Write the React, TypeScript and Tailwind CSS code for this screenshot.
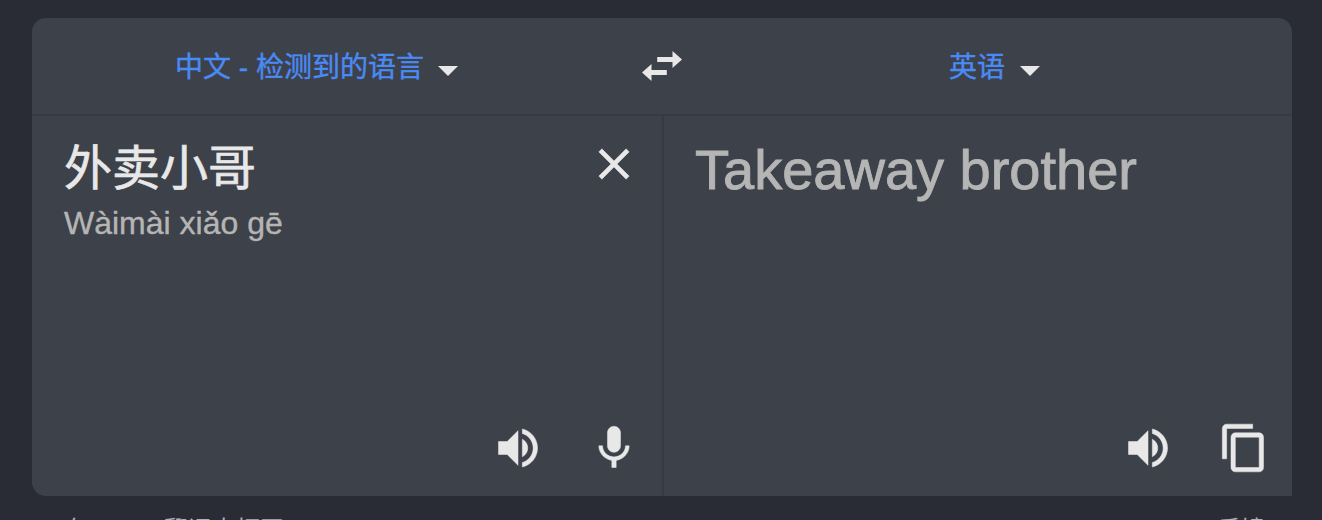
import type { ReactNode } from "react";

const VOLUME =
  "M3 9v6h4l5 5V4L7 9H3zm13.5 3c0-1.77-1.02-3.29-2.5-4.03v8.05c1.48-.73 2.5-2.25 2.5-4.02zM14 3.23v2.06c2.89.86 5 3.54 5 6.71s-2.11 5.85-5 6.71v2.06c4.01-.91 7-4.49 7-8.77s-2.99-7.86-7-8.77z";
const MIC =
  "M12 14c1.66 0 2.99-1.34 2.99-3L15 5c0-1.66-1.34-3-3-3S9 3.34 9 5v6c0 1.66 1.34 3 3 3zm5.3-3c0 3-2.54 5.1-5.3 5.1S6.7 14 6.7 11H5c0 3.41 2.72 6.23 6 6.72V21h2v-3.28c3.28-.48 6-3.3 6-6.72h-1.7z";
const COPY =
  "M16 1H4c-1.1 0-2 .9-2 2v14h2V3h12V1zm3 4H8c-1.1 0-2 .9-2 2v14c0 1.1.9 2 2 2h11c1.1 0 2-.9 2-2V7c0-1.1-.9-2-2-2zm0 16H8V7h11v14z";
const CLOSE =
  "M19 6.41L17.59 5 12 10.59 6.41 5 5 6.41 10.59 12 5 17.59 6.41 19 12 13.41 17.59 19 19 17.59 13.41 12z";

function IconButton({ label, d }: { label: string; d: string }) {
  return (
    <button aria-label={label} className="size-[52px] shrink-0 text-[#e8e8e8]">
      <svg viewBox="0 0 24 24" fill="currentColor" stroke="currentColor" strokeWidth="0.24" className="size-[52px]">
        <path d={d} />
      </svg>
    </button>
  );
}

function LanguageButton({ children }: { children: ReactNode }) {
  return (
    <button className="flex items-center text-[28px] leading-10 whitespace-nowrap text-[#4a8af4]">
      <span className="pt-1 [-webkit-text-stroke:0.4px]">{children}</span>
      <svg viewBox="0 0 20 10" className="mt-[9px] ml-[14.5px] h-[10px] w-5 fill-[#e8e8e8]">
        <path d="M0 0h20L10 10z" />
      </svg>
    </button>
  );
}

export default function App() {
  return (
    <div className="flex h-[520px] w-[1322px] flex-col overflow-hidden bg-[#292c35] pt-[18px] pr-[30px] pl-8 font-['Liberation_Sans','Noto_Sans_CJK_SC',sans-serif]">
      <main className="flex h-[478px] shrink-0 flex-col rounded-[14px] rounded-br-none bg-[#3d4149]">
        <header className="flex h-[98px] shrink-0 border-b-2 border-[#363a42]">
          <div className="flex w-[610px] items-center pl-[143px]">
            <LanguageButton>中文 - 检测到的语言</LanguageButton>
          </div>
          <button aria-label="交换语言" className="flex w-10 items-center justify-center">
            <svg viewBox="0 0 40 30" className="h-[30px] w-10 fill-[#e8e8e8]">
              <path d="M15.2 5.9h15.300V0L40 8.5 30.5 17v-5.900H15.200zM24.800 24.100H9.500V30L0 21.500 9.500 13v5.900h15.300z" />
            </svg>
          </button>
          <div className="flex flex-1 items-center pl-[267px]">
            <LanguageButton>英语</LanguageButton>
          </div>
        </header>
        <div className="flex flex-1">
          <section className="flex w-[632px] flex-col justify-between border-r-2 border-[#363a42] pr-[22px] pb-[22px] pl-8">
            <div className="flex justify-between pt-[22px]">
              <div className="pt-0.5">
                <h1 className="text-5xl leading-[58px] text-[#e8e8e8] [-webkit-text-stroke:0.7px]">外卖小哥</h1>
                <p className="pt-[5px] text-[32px] leading-10 text-[#b5b5b5] [-webkit-text-stroke:0.4px]">Wàimài xiǎo gē</p>
              </div>
              <IconButton label="清除" d={CLOSE} />
            </div>
            <div className="flex justify-end gap-11">
              <IconButton label="朗读原文" d={VOLUME} />
              <IconButton label="语音输入" d={MIC} />
            </div>
          </section>
          <section className="flex flex-1 flex-col justify-between pr-[22px] pb-[22px] pl-[31px]">
            <p className="pt-[22px] text-[56px] leading-16 whitespace-nowrap text-[#b5b5b5] [-webkit-text-stroke:0.9px]">
              Takeaway brother
            </p>
            <div className="flex justify-end gap-11">
              <IconButton label="朗读译文" d={VOLUME} />
              <IconButton label="复制" d={COPY} />
            </div>
          </section>
        </div>
      </main>
      <footer className="flex justify-between pt-[18px] pr-[27px] pl-8 text-2xl leading-8 whitespace-nowrap text-[#b0b0b2]">
        <span className="[word-spacing:-7.5px]">在 Google 翻译中打开</span>
        <span>反馈</span>
      </footer>
    </div>
  );
}
